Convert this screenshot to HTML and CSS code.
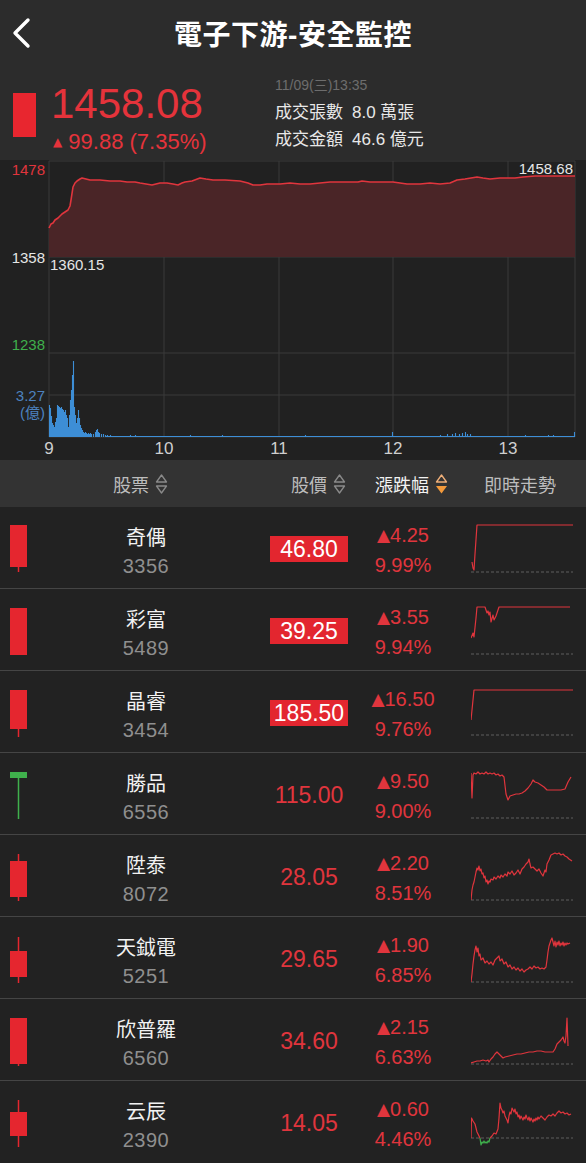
FILE: index.html
```html
<!DOCTYPE html>
<html lang="zh-Hant">
<head>
    <meta charset="UTF-8">
    <meta name="viewport" content="width=device-width, initial-scale=1.0">
    <title>電子下游-安全監控</title>
    <link rel="stylesheet" href="styles.css">
</head>
<body>

    <header class="nav">
        <svg class="back" width="22" height="32" viewBox="0 0 22 32">
            <path d="M18 3 L5 16 L18 29" fill="none" stroke="#fff" stroke-width="3.4" stroke-linecap="round" stroke-linejoin="round"/>
        </svg>
        <h1>電子下游-安全監控</h1>
        <span></span>
    </header>

    <section class="quote">
        <div class="quote-main">
            <span class="quote-bar"></span>
            <div>
                <div class="last">1458.08</div>
                <div class="change"><span class="tri">▲</span> 99.88 (7.35%)</div>
            </div>
        </div>
        <div class="quote-info">
            <div class="time">11/09(三)13:35</div>
            <div class="info-row">成交張數<span class="val">8.0 萬張</span></div>
            <div class="info-row">成交金額<span class="val">46.6 億元</span></div>
        </div>
    </section>

    <section class="chart">
        <svg width="586" height="300" viewBox="0 0 586 300">
            <!-- grid -->
            <g stroke="#3b3b3b" stroke-width="1">
                <path d="M49 1H575 M49 97H575 M49 193H575 M49 235H575 M49 277H575"/>
                <path d="M49 1V277 M164 1V277 M279 1V277 M393 1V277 M508 1V277 M575 1V277"/>
            </g>
            <!-- price area -->
            <polygon fill="#4a2527" points="49,68 51,64 53,63 55,60 58,58 60,56 62,54 65,52 68,50 70,46 71,40 73,27 75,23 77,21 80,19 82,18 86,19 90,20 100,20 110,21 120,21 127,22 135,22 140,23 146,24 152,25 160,23 167,23 173,24 178,25 182,23 185,22 192,21 200,18 206,19 213,20 225,20 240,21 248,23 253,25 260,25 267,24 280,24 290,23 300,24 310,24 320,23 330,22 340,22 350,22 358,22 362,21 370,22 380,22 393,22 400,23 407,24 420,24 430,23 440,24 450,23 457,20 465,19 477,17 483,18 490,19 500,18 515,18 523,17 535,16 543,16 555,16 565,16 575,16 575,97 49,97"/>
            <polyline fill="none" stroke="#e0353d" stroke-width="1.6" stroke-linejoin="round" points="49,68 51,64 53,63 55,60 58,58 60,56 62,54 65,52 68,50 70,46 71,40 73,27 75,23 77,21 80,19 82,18 86,19 90,20 100,20 110,21 120,21 127,22 135,22 140,23 146,24 152,25 160,23 167,23 173,24 178,25 182,23 185,22 192,21 200,18 206,19 213,20 225,20 240,21 248,23 253,25 260,25 267,24 280,24 290,23 300,24 310,24 320,23 330,22 340,22 350,22 358,22 362,21 370,22 380,22 393,22 400,23 407,24 420,24 430,23 440,24 450,23 457,20 465,19 477,17 483,18 490,19 500,18 515,18 523,17 535,16 543,16 555,16 565,16 575,16"/>
            <!-- volume -->
            <path stroke="#3d8ed6" stroke-width="1.1" d="M49.5 277V245 M50.5 277V248 M51.5 277V256 M52.5 277V263 M53.5 277V265 M54.5 277V267 M55.5 277V262 M56.5 277V258 M57.5 277V245 M58.5 277V246 M59.5 277V247 M60.5 277V248 M61.5 277V247 M62.5 277V249 M63.5 277V250 M64.5 277V252 M65.5 277V250 M66.5 277V255 M67.5 277V258 M68.5 277V267 M69.5 277V255 M70.5 277V240 M71.5 277V230 M72.5 277V215 M73.5 277V201 M74.5 277V247 M75.5 277V255 M76.5 277V263 M77.5 277V258 M78.5 277V250 M79.5 277V258 M80.5 277V265 M81.5 277V268 M82.5 277V270 M83.5 277V272 M84.5 277V273 M85.5 277V272 M86.5 277V273 M87.5 277V274 M88.5 277V273 M89.5 277V274 M90.5 277V273 M91.5 277V274 M93.5 277V274 M95.5 277V272 M96.5 277V270 M97.5 277V269 M98.5 277V272 M99.5 277V273 M101.5 277V274 M103.5 277V274 M105.5 277V275 M107.5 277V275 M110.5 277V275 M130.5 277V275 M135.5 277V275 M190.5 277V275 M222.5 277V275 M305.5 277V275 M392.5 277V272 M440.5 277V275 M447.5 277V274 M452.5 277V274 M455.5 277V273 M459.5 277V274 M462.5 277V273 M465.5 277V272 M467.5 277V274 M470.5 277V274 M525.5 277V275 M548.5 277V275 M553.5 277V275 M574.5 277V272"/>
            <path stroke="#3d8ed6" stroke-width="1" d="M105 276.5H575"/>
            <!-- labels -->
            <g font-size="15" text-anchor="end" class="axis">
                <text x="45" y="15" fill="#e0353d">1478</text>
                <text x="45" y="103" fill="#e6e6e6">1358</text>
                <text x="45" y="190" fill="#3fb04c">1238</text>
                <text x="45" y="241" fill="#4d82bf">3.27</text>
                <text x="45" y="258" fill="#4d82bf">(億)</text>
                <text x="573" y="14" fill="#e6e6e6">1458.68</text>
            </g>
            <text x="50" y="110" font-size="15" fill="#e6e6e6" class="axis">1360.15</text>
            <g font-size="17" text-anchor="middle" fill="#cfcfcf" class="axis">
                <text x="49" y="294">9</text>
                <text x="164" y="294">10</text>
                <text x="279" y="294">11</text>
                <text x="393" y="294">12</text>
                <text x="508" y="294">13</text>
            </g>
        </svg>
    </section>

    <div class="thead">
        <div class="th th-stock">股票
            <svg class="sort" width="13" height="22" viewBox="0 0 13 22"><path d="M6.5 2 L11.5 9 H1.5 Z M1.5 13 H11.5 L6.5 20 Z" fill="none" stroke="#8a8a8a" stroke-width="1.3" stroke-linejoin="round"/></svg>
        </div>
        <div class="th th-price">股價
            <svg class="sort" width="13" height="22" viewBox="0 0 13 22"><path d="M6.5 2 L11.5 9 H1.5 Z M1.5 13 H11.5 L6.5 20 Z" fill="none" stroke="#8a8a8a" stroke-width="1.3" stroke-linejoin="round"/></svg>
        </div>
        <div class="th th-change active">漲跌幅
            <svg class="sort" width="13" height="22" viewBox="0 0 13 22"><path d="M6.5 2 L11.5 9 H1.5 Z" fill="none" stroke="#f0b07a" stroke-width="1.3" stroke-linejoin="round"/><path d="M1 13 H12 L6.5 20.5 Z" fill="#f39a3b"/></svg>
        </div>
        <div class="th th-trend">即時走勢</div>
    </div>

    <ul class="rows">
        <li class="row">
            <svg class="candle" width="17" height="82" viewBox="0 0 17 82"><path d="M8.5 60V65" stroke="#e5262f" stroke-width="1.5"/><rect x="0" y="18" width="17" height="42" fill="#e5262f"/></svg>
            <div class="stock"><div class="name">奇偶</div><div class="code">3356</div></div>
            <div class="price"><span class="limit">46.80</span></div>
            <div class="chg"><div><span class="up">▲</span>4.25</div><div>9.99%</div></div>
            <svg class="spark" width="102" height="50" viewBox="0 0 102 50">
                <path d="M0 48H102"/>
                <polyline points="1,38 2,44 3,46 4,30 6,1 102,1"/>
            </svg>
        </li>
        <li class="row">
            <svg class="candle" width="17" height="82" viewBox="0 0 17 82"><rect x="0" y="19" width="17" height="47" fill="#e5262f"/></svg>
            <div class="stock"><div class="name">彩富</div><div class="code">5489</div></div>
            <div class="price"><span class="limit">39.25</span></div>
            <div class="chg"><div><span class="up">▲</span>3.55</div><div>9.94%</div></div>
            <svg class="spark" width="102" height="50" viewBox="0 0 102 50">
                <path d="M0 48H102"/>
                <polyline points="0,32 2,27 3,31 5,12 6,1 14,1 16,7 17,5 18,9 19,6 20,16 22,9 23,14 25,10 26,7 28,1 99,1"/>
            </svg>
        </li>
        <li class="row">
            <svg class="candle" width="17" height="82" viewBox="0 0 17 82"><path d="M8.5 58V66" stroke="#e5262f" stroke-width="1.5"/><rect x="0" y="19" width="17" height="39" fill="#e5262f"/></svg>
            <div class="stock"><div class="name">晶睿</div><div class="code">3454</div></div>
            <div class="price"><span class="limit">185.50</span></div>
            <div class="chg"><div><span class="up">▲</span>16.50</div><div>9.76%</div></div>
            <svg class="spark" width="102" height="50" viewBox="0 0 102 50">
                <path d="M0 47H102"/>
                <polyline points="0,32 3,2 102,2"/>
            </svg>
        </li>
        <li class="row">
            <svg class="candle" width="17" height="82" viewBox="0 0 17 82"><path d="M8.5 25V66" stroke="#3fb04c" stroke-width="1.5"/><rect x="0" y="19" width="17" height="6" fill="#3fb04c"/></svg>
            <div class="stock"><div class="name">勝品</div><div class="code">6556</div></div>
            <div class="price"><span>115.00</span></div>
            <div class="chg"><div><span class="up">▲</span>9.50</div><div>9.00%</div></div>
            <svg class="spark" width="102" height="50" viewBox="0 0 102 50">
                <path d="M0 48H102"/>
                <polyline points="0,3 1,28 2,5 3,3 5,4 7,2 9,4 11,3 13,4 15,2 17,4 19,3 21,4 23,3 25,5 27,4 29,6 31,5 33,7 35,24 37,30 39,26 42,25 45,24 48,24 51,23 54,21 57,18 60,14 62,10 64,12 67,13 70,15 73,17 76,20 80,20 85,20 90,20 94,19 97,12 100,7"/>
            </svg>
        </li>
        <li class="row">
            <svg class="candle" width="17" height="82" viewBox="0 0 17 82"><path d="M8.5 19V66" stroke="#e5262f" stroke-width="1.5"/><rect x="0" y="26" width="17" height="36" fill="#e5262f"/></svg>
            <div class="stock"><div class="name">陞泰</div><div class="code">8072</div></div>
            <div class="price"><span>28.05</span></div>
            <div class="chg"><div><span class="up">▲</span>2.20</div><div>8.51%</div></div>
            <svg class="spark" width="102" height="50" viewBox="0 0 102 50">
                <path d="M0 48H102"/>
                <polyline points="0,48 1,38 2,33 3,30 4,25 5,20 6,16 7,18 8,14 9,19 10,17 11,22 12,21 13,26 14,24 15,30 16,28 17,32 18,29 19,30 20,27 22,28 23,25 25,27 27,24 29,26 30,23 32,25 34,22 36,24 37,20 39,22 41,19 43,23 45,21 47,18 49,22 51,17 53,15 55,12 57,10 58,7 59,12 60,16 62,15 64,17 66,19 68,17 70,21 72,24 73,21 74,18 75,20 76,12 78,8 80,3 82,2 84,1 86,2 88,1 90,3 92,2 94,4 96,5 98,7 101,9"/>
            </svg>
        </li>
        <li class="row">
            <svg class="candle" width="17" height="82" viewBox="0 0 17 82"><path d="M8.5 20V66" stroke="#e5262f" stroke-width="1.5"/><rect x="0" y="34" width="17" height="26" fill="#e5262f"/></svg>
            <div class="stock"><div class="name">天鉞電</div><div class="code">5251</div></div>
            <div class="price"><span>29.65</span></div>
            <div class="chg"><div><span class="up">▲</span>1.90</div><div>6.85%</div></div>
            <svg class="spark" width="102" height="50" viewBox="0 0 102 50">
                <path d="M0 48H102"/>
                <polyline points="0,48 1,40 2,30 3,22 4,16 5,12 6,18 7,14 8,22 9,20 10,26 12,24 14,29 16,27 18,30 20,28 22,31 24,26 26,24 28,22 29,27 31,25 33,30 35,28 37,33 39,31 41,35 43,33 45,36 47,34 49,37 51,35 53,38 55,36 57,35 59,33 61,35 63,32 65,34 67,33 69,35 71,34 73,35 75,33 76,26 77,18 78,12 80,6 81,4 82,8 83,12 84,7 85,13 86,8 87,11 88,7 89,12 90,9 91,11 92,8 93,12 94,9 95,11 96,9 97,10 99,9"/>
            </svg>
        </li>
        <li class="row">
            <svg class="candle" width="17" height="82" viewBox="0 0 17 82"><path d="M8.5 65V67" stroke="#e5262f" stroke-width="1.5"/><rect x="0" y="19" width="17" height="46" fill="#e5262f"/></svg>
            <div class="stock"><div class="name">欣普羅</div><div class="code">6560</div></div>
            <div class="price"><span>34.60</span></div>
            <div class="chg"><div><span class="up">▲</span>2.15</div><div>6.63%</div></div>
            <svg class="spark" width="102" height="50" viewBox="0 0 102 50">
                <path d="M0 48H102"/>
                <polyline points="0,47 3,46 6,45 9,45 12,44 15,45 17,44 18,46 20,43 22,41 24,38 26,36 28,38 30,40 32,42 34,41 38,40 42,39 46,38 50,38 54,37 58,36 62,36 66,35 70,35 74,36 78,36 82,36 84,33 86,28 88,26 90,24 92,21 93,25 94,27 95,20 96,2 97,30"/>
            </svg>
        </li>
        <li class="row">
            <svg class="candle" width="17" height="82" viewBox="0 0 17 82"><path d="M8.5 19V66" stroke="#e5262f" stroke-width="1.5"/><rect x="0" y="31" width="17" height="24" fill="#e5262f"/></svg>
            <div class="stock"><div class="name">云辰</div><div class="code">2390</div></div>
            <div class="price"><span>14.05</span></div>
            <div class="chg"><div><span class="up">▲</span>0.60</div><div>4.46%</div></div>
            <svg class="spark" width="102" height="50" viewBox="0 0 102 50">
                <path d="M0 40H102"/>
                <polyline points="0,40 0.5,20 2,23 4,26 5,30 6,34 8,38 9,40"/>
                <polyline class="down" points="9,40 10,47 11,44 12,45 13,43 14,45 15,44 16,45 17,43 18,44 19,40"/>
                <polyline points="19,40 21,38 23,35 25,36 27,31 28,20 29,5 30,10 31,12 32,15 33,13 34,18 35,20 36,22 37,25 38,18 39,14 40,16 41,10 42,12 43,14 44,11 45,16 46,14 47,19 48,17 49,21 50,18 51,20 52,22 53,19 54,21 55,17 56,20 57,22 58,19 59,23 60,20 61,22 62,24 63,21 64,23 65,20 66,22 67,19 68,21 70,18 72,20 74,22 76,19 78,17 80,18 82,16 84,18 86,15 88,13 90,15 92,14 94,16 96,15 98,17 100,16"/>
            </svg>
        </li>
    </ul>

</body>
</html>
```

FILE: styles.css
```css
* {
    box-sizing: border-box;
}

body {
    margin: 0;
    width: 586px;
    background-color: #222222;
    color: #fff;
    font-family: "Liberation Sans", "Noto Sans CJK TC", sans-serif;
}

/* top bar */
.nav {
    display: grid;
    grid-template-columns: 40px 1fr 40px;
    align-items: center;
    height: 66px;
    background-color: #2c2c2c;
}

.back {
    margin-left: 10px;
}

.nav h1 {
    margin: 0;
    text-align: center;
    font-size: 28px;
    font-weight: bold;
    letter-spacing: 0.5px;
}

/* quote summary */
.quote {
    display: grid;
    grid-template-columns: 275px 1fr;
    height: 94px;
    background-color: #2c2c2c;
}

.quote-main {
    display: flex;
    align-items: flex-start;
    gap: 15px;
    padding-left: 13px;
}

.quote-bar {
    width: 23px;
    height: 44px;
    margin-top: 27px;
    background-color: #e8262f;
}

.last {
    margin-top: 17px;
    font-size: 42px;
    line-height: 42px;
    color: #e5333b;
}

.change {
    margin-top: 4px;
    font-size: 22px;
    line-height: 26px;
    color: #e5333b;
}

.change .tri {
    font-family: "DejaVu Sans", sans-serif;
    font-size: 12px;
    vertical-align: 3px;
    padding-left: 2px;
}

.quote-info {
    padding-top: 10px;
}

.time {
    font-size: 14px;
    line-height: 18px;
    color: #6d6d6d;
    margin-bottom: 5px;
}

.info-row {
    font-size: 17px;
    line-height: 27px;
    color: #e8e8e8;
}

.info-row .val {
    margin-left: 9px;
}

/* intraday chart */
.chart {
    height: 300px;
    background-color: #212121;
}

.chart svg {
    display: block;
}

.axis {
    font-family: "Liberation Sans", "Noto Sans CJK TC", sans-serif;
}

/* table */
.thead {
    display: flex;
    align-items: center;
    height: 47px;
    background-color: #333333;
    font-size: 18px;
    color: #bdbdbd;
}

.th {
    display: flex;
    align-items: center;
    gap: 6px;
}

.th-stock {
    width: 291px;
    padding-left: 113px;
}

.th-price {
    width: 84px;
}

.th-change {
    width: 109px;
}

.th.active {
    color: #f2f2f2;
}

.rows {
    list-style: none;
    margin: 0;
    padding: 0;
}

.row {
    display: grid;
    grid-template-columns: 40px 212px 114px 74px 146px;
    align-items: start;
    height: 82px;
    border-bottom: 1px solid #454545;
    background-color: #222222;
}

.row:last-child {
    border-bottom: none;
}

.candle {
    display: block;
    margin-left: 10px;
}

.stock {
    padding-top: 17px;
    text-align: center;
}

.name {
    font-size: 20px;
    line-height: 28px;
    color: #f2f2f2;
}

.code {
    font-size: 20px;
    line-height: 28px;
    color: #8f8f8f;
    letter-spacing: 0.5px;
}

.price {
    display: flex;
    justify-content: center;
    padding-top: 29px;
}

.price span {
    display: block;
    width: 78px;
    height: 26px;
    line-height: 26px;
    text-align: center;
    font-size: 23px;
    color: #e0353d;
}

.price .limit {
    background-color: #e3262f;
    color: #fff;
}

.chg {
    padding-top: 13px;
    text-align: center;
    font-size: 20px;
    line-height: 30px;
    color: #e0353d;
    white-space: nowrap;
}

.chg .up {
    font-family: "DejaVu Sans", sans-serif;
    font-size: 17px;
    vertical-align: 1px;
}

.spark {
    display: block;
    margin: 17px 0 0 31px;
}

.spark path {
    stroke: #5e5e5e;
    stroke-dasharray: 3 2;
}

.spark polyline {
    fill: none;
    stroke: #e0353d;
    stroke-width: 1.2;
    stroke-linejoin: round;
}

.spark polyline.down {
    stroke: #3fb04c;
}
```
